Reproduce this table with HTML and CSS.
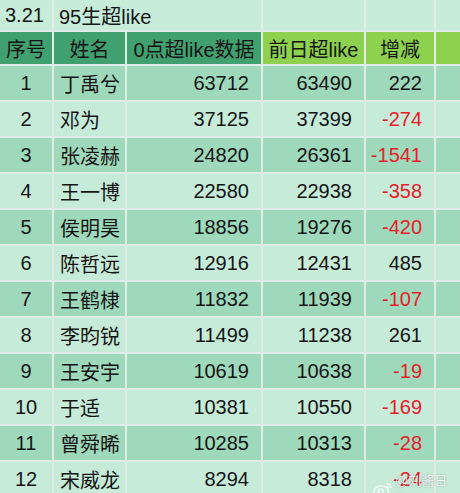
FILE: index.html
```html
<!DOCTYPE html>
<html lang="zh">
<head>
<meta charset="utf-8">
<link rel="stylesheet" href="styles.css">
</head>
<body>
<div class="sheet">
  <div class="c title">3.21</div>
  <div class="c title span2">95生超like</div>
  <div class="c title"></div>
  <div class="c title"></div>
  <div class="c title"></div>

  <div class="c hd dark">序号</div>
  <div class="c hd dark">姓名</div>
  <div class="c hd dark">0点超like数据</div>
  <div class="c hd lime">前日超like</div>
  <div class="c hd lime">增减</div>
  <div class="c hd lime"></div>

  <div class="c odd n">1</div><div class="c odd nm">丁禹兮</div><div class="c odd r">63712</div><div class="c odd r">63490</div><div class="c odd r">222</div><div class="c odd"></div>
  <div class="c even n">2</div><div class="c even nm">邓为</div><div class="c even r">37125</div><div class="c even r">37399</div><div class="c even r neg">-274</div><div class="c even"></div>
  <div class="c odd n">3</div><div class="c odd nm">张凌赫</div><div class="c odd r">24820</div><div class="c odd r">26361</div><div class="c odd r neg">-1541</div><div class="c odd"></div>
  <div class="c even n">4</div><div class="c even nm">王一博</div><div class="c even r">22580</div><div class="c even r">22938</div><div class="c even r neg">-358</div><div class="c even"></div>
  <div class="c odd n">5</div><div class="c odd nm">侯明昊</div><div class="c odd r">18856</div><div class="c odd r">19276</div><div class="c odd r neg">-420</div><div class="c odd"></div>
  <div class="c even n">6</div><div class="c even nm">陈哲远</div><div class="c even r">12916</div><div class="c even r">12431</div><div class="c even r">485</div><div class="c even"></div>
  <div class="c odd n">7</div><div class="c odd nm">王鹤棣</div><div class="c odd r">11832</div><div class="c odd r">11939</div><div class="c odd r neg">-107</div><div class="c odd"></div>
  <div class="c even n">8</div><div class="c even nm">李昀锐</div><div class="c even r">11499</div><div class="c even r">11238</div><div class="c even r">261</div><div class="c even"></div>
  <div class="c odd n">9</div><div class="c odd nm">王安宇</div><div class="c odd r">10619</div><div class="c odd r">10638</div><div class="c odd r neg">-19</div><div class="c odd"></div>
  <div class="c even n">10</div><div class="c even nm">于适</div><div class="c even r">10381</div><div class="c even r">10550</div><div class="c even r neg">-169</div><div class="c even"></div>
  <div class="c odd n">11</div><div class="c odd nm">曾舜晞</div><div class="c odd r">10285</div><div class="c odd r">10313</div><div class="c odd r neg">-28</div><div class="c odd"></div>
  <div class="c even n">12</div><div class="c even nm">宋威龙</div><div class="c even r">8294</div><div class="c even r">8318</div><div class="c even r neg">-24</div><div class="c even"></div>
</div>
<div class="mark">
  <svg class="wb" width="20" height="16" viewBox="0 0 22 18">
    <ellipse cx="9" cy="11" rx="8" ry="5.5" fill="none" stroke="#fff" stroke-width="1.6"/>
    <ellipse cx="8.5" cy="11.5" rx="3" ry="2.3" fill="none" stroke="#fff" stroke-width="1.4"/>
    <path d="M15 3 a5 5 0 0 1 5 5" fill="none" stroke="#fff" stroke-width="1.6"/>
    <path d="M15 6 a2.3 2.3 0 0 1 2.3 2.3" fill="none" stroke="#fff" stroke-width="1.4"/>
  </svg>
  <span>@刘酱日常</span>
</div>
</body>
</html>
```

FILE: styles.css
```css
html, body {
  margin: 0;
  padding: 0;
  background: #e2ece6;
}
body {
  width: 460px;
  height: 493px;
  overflow: hidden;
  position: relative;
  font-family: "Liberation Sans", "Noto Sans CJK SC", sans-serif;
  font-size: 20px;
  color: #151515;
}
.sheet {
  display: grid;
  grid-template-columns: 52px 71px 134px 101px 68px 1fr;
  grid-template-rows: 30px 32px repeat(12, 34px);
  gap: 2px;
  background: #e2ece6;
}
.c {
  display: flex;
  align-items: center;
  white-space: nowrap;
  overflow: hidden;
}
.title {
  background: #c8ecda;
  padding-left: 5px;
}
.span2 {
  grid-column: span 2;
}
.hd {
  justify-content: center;
}
.dark {
  background: #41a06f;
}
.lime {
  background: #8ed14e;
}
.odd {
  background: #9fd9bc;
}
.even {
  background: #c7ebd9;
}
.n {
  justify-content: center;
}
.nm {
  padding-left: 6px;
}
.r {
  justify-content: flex-end;
  padding-right: 12px;
}
.neg {
  color: #e8202a;
}
.mark {
  position: absolute;
  left: 373px;
  top: 470px;
  display: flex;
  align-items: center;
  gap: 2px;
  color: rgba(255, 255, 255, 0.85);
  font-size: 13px;
  text-shadow: 0 0 2px rgba(0, 0, 0, 0.35);
}
.wb {
  opacity: 0.85;
}
```
